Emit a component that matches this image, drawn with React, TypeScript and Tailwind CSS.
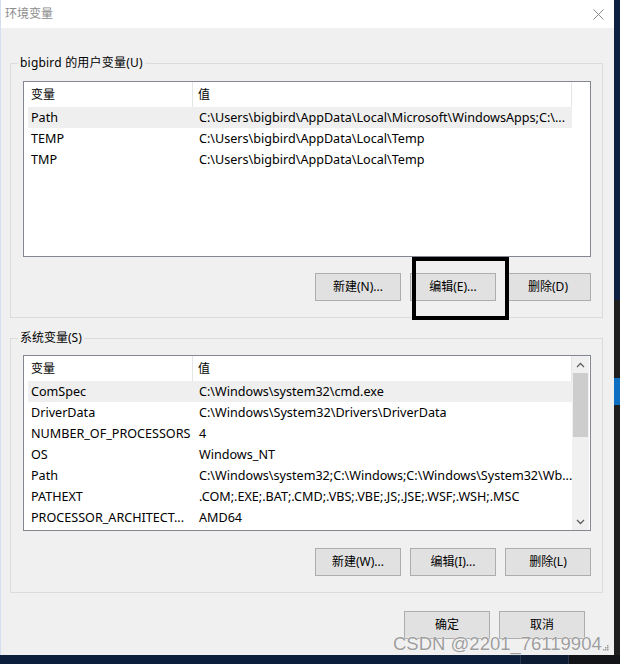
import React from 'react';

const userVars = [
  { name: 'Path', value: 'C:\\Users\\bigbird\\AppData\\Local\\Microsoft\\WindowsApps;C:\\...' },
  { name: 'TEMP', value: 'C:\\Users\\bigbird\\AppData\\Local\\Temp' },
  { name: 'TMP', value: 'C:\\Users\\bigbird\\AppData\\Local\\Temp' },
];

const sysVars = [
  { name: 'ComSpec', value: 'C:\\Windows\\system32\\cmd.exe' },
  { name: 'DriverData', value: 'C:\\Windows\\System32\\Drivers\\DriverData' },
  { name: 'NUMBER_OF_PROCESSORS', value: '4' },
  { name: 'OS', value: 'Windows_NT' },
  { name: 'Path', value: 'C:\\Windows\\system32;C:\\Windows;C:\\Windows\\System32\\Wb...' },
  { name: 'PATHEXT', value: '.COM;.EXE;.BAT;.CMD;.VBS;.VBE;.JS;.JSE;.WSF;.WSH;.MSC' },
  { name: 'PROCESSOR_ARCHITECT...', value: 'AMD64' },
];

const font = { fontFamily: '"Noto Sans", "Noto Sans CJK SC", sans-serif' };

function WinButton({ label }: { label: string }) {
  return (
    <div className="w-[86px] h-[28px] bg-[#e1e1e1] border border-[#adadad] flex items-center justify-center text-[12px] text-black">
      {label}
    </div>
  );
}

function VarList({ rows, scroll }: { rows: { name: string; value: string }[]; scroll?: boolean }) {
  return (
    <div className="ml-[12px] w-[568px] h-[176px] border border-[#828790] bg-white flex">
      <div className="w-[548px] pl-[4px] flex flex-col">
        <div className="h-[25px] flex text-[12px] text-black">
          <div className="w-[164px] pl-[3px] flex items-center">变量</div>
          <div className="w-[1px] bg-[#e5e5e5]" />
          <div className="w-[378px] pl-[5px] flex items-center">值</div>
          <div className="w-[1px] bg-[#e5e5e5]" />
        </div>
        {rows.map((r, i) => (
          <div
            key={i}
            className={`h-[21px] w-[544px] pt-[1px] flex items-center text-[12.6px] text-black ${i === 0 ? 'bg-[#efefef]' : ''}`}
          >
            <div className="w-[165px] pl-[3px] whitespace-nowrap overflow-hidden">{r.name}</div>
            <div className="w-[379px] pl-[6px] whitespace-nowrap overflow-hidden">{r.value}</div>
          </div>
        ))}
      </div>
      {scroll && (
        <div className="w-[17px] bg-[#f0f0f0] flex flex-col">
          <div className="h-[17px] flex items-center justify-center">
            <svg width="9" height="6" viewBox="0 0 9 6">
              <path d="M1 5 L4.5 1.5 L8 5" fill="none" stroke="#606060" strokeWidth="1.3" />
            </svg>
          </div>
          <div className="mx-[1px] h-[64px] bg-[#cdcdcd]" />
          <div className="flex-1" />
          <div className="h-[17px] flex items-center justify-center">
            <svg width="9" height="6" viewBox="0 0 9 6">
              <path d="M1 1 L4.5 4.5 L8 1" fill="none" stroke="#606060" strokeWidth="1.3" />
            </svg>
          </div>
        </div>
      )}
    </div>
  );
}

export default function App() {
  return (
    <div className="relative w-[620px] h-[664px] bg-[#0b1d38] flex flex-col overflow-hidden" style={font}>
      <div className="flex h-[655px]">
        <div className="w-[614px] h-[655px] bg-[#f0f0f0] border-l border-[#d3dff0] flex flex-col">
          {/* title bar */}
          <div className="h-[28px] bg-white flex items-center justify-between pl-[4px] pr-[10px]">
            <span className="text-[12px] text-[#8c8c8c]">环境变量</span>
            <svg width="11" height="11" viewBox="0 0 11 11">
              <path d="M0.5 0.5 L10.5 10.5 M10.5 0.5 L0.5 10.5" stroke="#8a8a8a" strokeWidth="1" />
            </svg>
          </div>

          <div className="pl-[9px] flex flex-col">
            <fieldset className="mt-[27px] w-[592px] border border-[#dcdcdc] pb-[16px] pr-[11px]">
              <legend className="ml-[7px] px-[2px] text-[12px] leading-[16px] text-black tracking-[0.2px]">bigbird 的用户变量(U)</legend>
              <div className="mt-[10px]">
                <VarList rows={userVars} />
              </div>
              <div className="mt-[16px] flex justify-end gap-[9px]">
                <WinButton label="新建(N)..." />
                <WinButton label="编辑(E)..." />
                <WinButton label="删除(D)" />
              </div>
            </fieldset>

            <fieldset className="mt-[12px] w-[592px] border border-[#dcdcdc] pb-[16px] pr-[11px]">
              <legend className="ml-[7px] px-[2px] text-[12px] leading-[16px] text-black">系统变量(S)</legend>
              <div className="mt-[9px]">
                <VarList rows={sysVars} scroll />
              </div>
              <div className="mt-[17px] flex justify-end gap-[9px]">
                <WinButton label="新建(W)..." />
                <WinButton label="编辑(I)..." />
                <WinButton label="删除(L)" />
              </div>
            </fieldset>
          </div>

          <div className="mt-[18px] flex justify-end gap-[9px] pr-[29px]">
            <WinButton label="确定" />
            <WinButton label="取消" />
          </div>
        </div>

        {/* window behind, right edge */}
        <div className="w-[6px] flex flex-col">
          <div className="h-[300px] bg-[#0c2142]" />
          <div className="h-[78px] bg-[#1e1e1e]" />
          <div className="h-[27px] bg-[#0e6fc2]" />
          <div className="flex-1 bg-[#1e1e1e]" />
        </div>
      </div>

      {/* taskbar strip */}
      <div className="flex-1 flex">
        <div className="w-[520px] bg-[#0b1e3c]" />
        <div className="w-[1px] bg-[#2a3650]" />
        <div className="w-[47px] bg-[#0d1c33]" />
        <div className="w-[1px] bg-[#2a3650]" />
        <div className="flex-1 bg-[#121418]" />
      </div>

      {/* annotation box */}
      <div className="absolute left-[412px] top-[257px] w-[97px] h-[63px] border-[4px] border-black" />

      {/* watermark */}
      <div
        className="absolute left-[393px] top-[632px] flex items-end text-[18.5px] leading-[24px] text-[#9d9d9d]"
        style={{ fontFamily: '"Liberation Sans", Arial, sans-serif', textShadow: '0 0 1px #ffffff, 0 0 1px #ffffff' }}
      >
        CSDN @2201_76119904
        <svg width="6" height="6" viewBox="0 0 6 6" className="mb-[5px] ml-[1px]">
          <rect x="4" y="0" width="1.5" height="1.5" fill="#9d9d9d" />
          <rect x="2" y="2" width="1.5" height="1.5" fill="#9d9d9d" />
          <rect x="4" y="2" width="1.5" height="1.5" fill="#9d9d9d" />
          <rect x="0" y="4" width="1.5" height="1.5" fill="#9d9d9d" />
          <rect x="2" y="4" width="1.5" height="1.5" fill="#9d9d9d" />
          <rect x="4" y="4" width="1.5" height="1.5" fill="#9d9d9d" />
        </svg>
      </div>
    </div>
  );
}
